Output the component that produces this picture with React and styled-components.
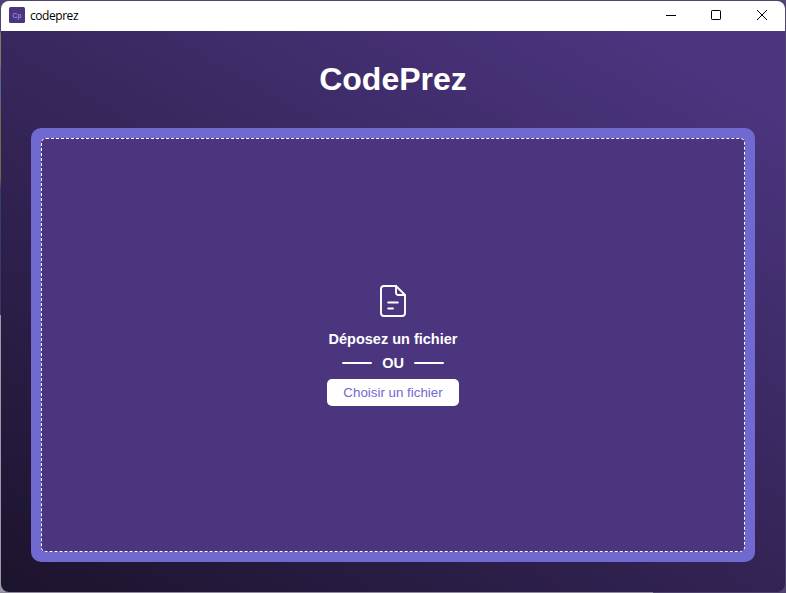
import React from "react";
import styled, { createGlobalStyle } from "styled-components";

const GlobalStyle = createGlobalStyle`
  * { box-sizing: border-box; }
  body { margin: 0; overflow: hidden; }
`;

const Desktop = styled.div`
  height: 100vh;
  padding: 1px;
  background:
    linear-gradient(#8f899b, #8f899b) 0 100% / 653px 1px no-repeat,
    linear-gradient(#9d98a8, #9d98a8) 0 100% / 12px 278px no-repeat,
    linear-gradient(#4f4370 30px, #8a7560 34px, #8a7560 62px, #5a6484 72px, #5a6484 100px, #75674f 112px, #75674f 176px, #33406e 190px, #3a3763 300px) 0 0 / 1px 315px no-repeat,
    linear-gradient(90deg, #4f4370, #51456f);
`;

const Window = styled.div`
  display: flex;
  flex-direction: column;
  height: 100%;
  border-radius: 8px;
  overflow: hidden;
`;

const TitleBar = styled.header`
  display: flex;
  align-items: center;
  flex: none;
  height: 30px;
  padding-left: 8px;
  background: #fff;
`;

const AppBadge = styled.svg`
  display: block;
  width: 16px;
  height: 16px;
  margin-top: -2px;
`;

const BadgeText = styled.text`
  font: 8px "Liberation Sans", Arial, sans-serif;
  fill: #b3a5fa;
`;

const WindowName = styled.span`
  flex: 1;
  margin-left: 5px;
  font: 12px/16px "Open Sans", sans-serif;
  letter-spacing: -0.45px;
  color: #000;
`;

const WindowButton = styled.button`
  display: grid;
  place-items: center;
  width: ${(p) => p.$width || 46}px;
  height: 30px;
  padding: 0 0 2px;
  border: 0;
  background: none;
`;

const ControlIcon = styled.svg`
  display: block;
  width: 12px;
  height: 12px;
  fill: none;
  stroke: #000;
`;

const Content = styled.main`
  display: flex;
  flex-direction: column;
  flex: 1;
  padding: 0 30px 30px;
  background: linear-gradient(30deg, #1c132d, #4b357f 92%);
  font-family: "Liberation Sans", Arial, sans-serif;
  color: #fff;
`;

const Title = styled.h1`
  height: 97px;
  margin: 0;
  font-size: 32px;
  line-height: 97px;
  text-align: center;
`;

const DropFrame = styled.section`
  display: flex;
  flex: 1;
  padding: 10px;
  border-radius: 10px;
  background: #7069cf;
`;

const DropZone = styled.div`
  display: flex;
  flex: 1;
  flex-direction: column;
  align-items: center;
  padding-top: 145px;
  border: 1px dashed #fff;
  border-radius: 5px;
  background: #4b357f;
`;

const FileIcon = styled.svg`
  display: block;
  width: 28px;
  height: 34px;
  fill: none;
  stroke: #fff;
  stroke-width: 1.9;
  stroke-linecap: round;
  stroke-linejoin: round;
`;

const DropLabel = styled.p`
  margin: 12px 0 0;
  font-size: 14.5px;
  font-weight: 700;
  line-height: 18px;
`;

const Separator = styled.div`
  display: flex;
  align-items: center;
  gap: 10px;
  margin-top: 6px;
  font-size: 14.5px;
  font-weight: 700;
  line-height: 18px;
`;

const Line = styled.span`
  width: 30px;
  height: 2px;
  border-radius: 1px;
  background: #fff;
`;

const ChooseButton = styled.button`
  width: 132px;
  height: 27px;
  margin-top: 7px;
  padding: 0;
  border: 0;
  border-radius: 5px;
  background: #fff;
  color: #7069cf;
  font: 13.333px "Liberation Sans", Arial, sans-serif;
`;

export default function App() {
  return (
    <>
      <GlobalStyle />
      <Desktop>
        <Window>
          <TitleBar>
            <AppBadge viewBox="0 0 16 16">
              <rect width="16" height="16" rx="1.5" fill="#4b357f" />
              <BadgeText x="3.6" y="10.5" textLength="8.6" lengthAdjust="spacingAndGlyphs">Cp</BadgeText>
            </AppBadge>
            <WindowName>codeprez</WindowName>
            <WindowButton aria-label="Réduire" $width={44}>
              <ControlIcon viewBox="0 0 12 12"><path d="M1 6.5h10" /></ControlIcon>
            </WindowButton>
            <WindowButton aria-label="Agrandir">
              <ControlIcon viewBox="0 0 12 12"><rect x="1.5" y="1.5" width="9" height="9" rx="0.7" /></ControlIcon>
            </WindowButton>
            <WindowButton aria-label="Fermer">
              <ControlIcon viewBox="0 0 12 12"><path d="M1 1l10 10M11 1L1 11" /></ControlIcon>
            </WindowButton>
          </TitleBar>
          <Content>
            <Title>CodePrez</Title>
            <DropFrame>
              <DropZone>
                <FileIcon viewBox="0 0 28 34">
                  <path d="M17 2H5Q2 2 2 5V29Q2 32 5 32H23Q26 32 26 29V11Z" />
                  <path d="M17 2V8.5Q17 11 19.5 11H26M9.2 18.5H18.8M9.2 24.5H14" />
                </FileIcon>
                <DropLabel>Déposez un fichier</DropLabel>
                <Separator><Line />OU<Line /></Separator>
                <ChooseButton>Choisir un fichier</ChooseButton>
              </DropZone>
            </DropFrame>
          </Content>
        </Window>
      </Desktop>
    </>
  );
}
